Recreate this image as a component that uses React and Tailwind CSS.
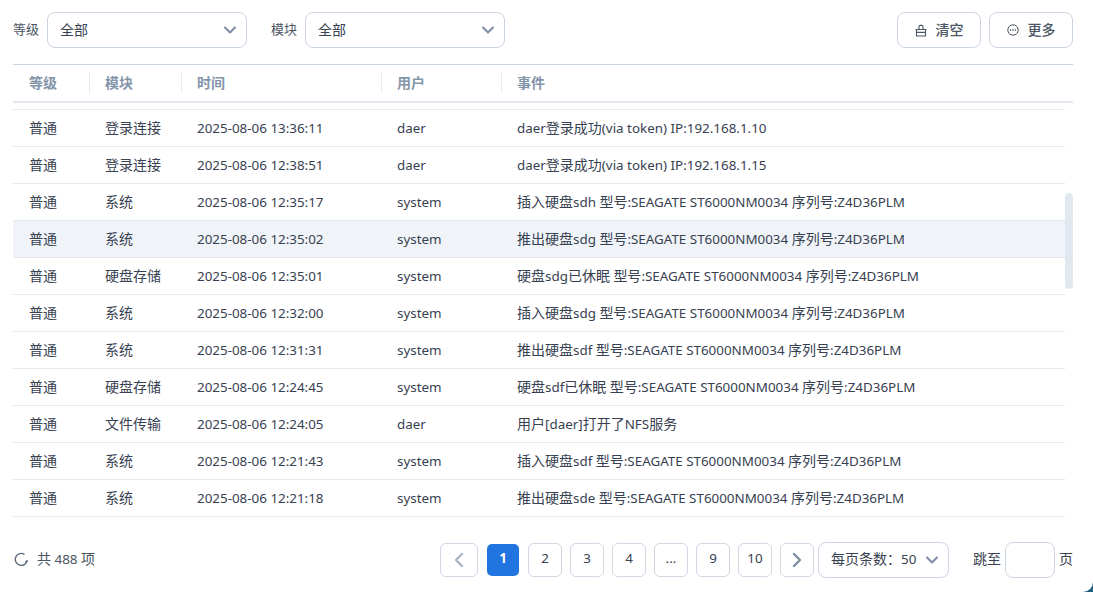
import { ChevronDown, ChevronLeft, ChevronRight } from "lucide-react";

const rows = [
  ["普通", "登录连接", "2025-08-06 13:36:11", "daer", "daer登录成功(via token) IP:192.168.1.10"],
  ["普通", "登录连接", "2025-08-06 12:38:51", "daer", "daer登录成功(via token) IP:192.168.1.15"],
  ["普通", "系统", "2025-08-06 12:35:17", "system", "插入硬盘sdh 型号:SEAGATE ST6000NM0034 序列号:Z4D36PLM"],
  ["普通", "系统", "2025-08-06 12:35:02", "system", "推出硬盘sdg 型号:SEAGATE ST6000NM0034 序列号:Z4D36PLM"],
  ["普通", "硬盘存储", "2025-08-06 12:35:01", "system", "硬盘sdg已休眠 型号:SEAGATE ST6000NM0034 序列号:Z4D36PLM"],
  ["普通", "系统", "2025-08-06 12:32:00", "system", "插入硬盘sdg 型号:SEAGATE ST6000NM0034 序列号:Z4D36PLM"],
  ["普通", "系统", "2025-08-06 12:31:31", "system", "推出硬盘sdf 型号:SEAGATE ST6000NM0034 序列号:Z4D36PLM"],
  ["普通", "硬盘存储", "2025-08-06 12:24:45", "system", "硬盘sdf已休眠 型号:SEAGATE ST6000NM0034 序列号:Z4D36PLM"],
  ["普通", "文件传输", "2025-08-06 12:24:05", "daer", "用户[daer]打开了NFS服务"],
  ["普通", "系统", "2025-08-06 12:21:43", "system", "插入硬盘sdf 型号:SEAGATE ST6000NM0034 序列号:Z4D36PLM"],
  ["普通", "系统", "2025-08-06 12:21:18", "system", "推出硬盘sde 型号:SEAGATE ST6000NM0034 序列号:Z4D36PLM"],
];

const headers = ["等级", "模块", "时间", "用户", "事件"];

// latin runs sit a bit smaller than the CJK ones
function Mixed({ text }) {
  return text.split(/([\u4e00-\u9fff：]+)/).map((part, i) =>
    i % 2 === 1 ? <span key={i} className="text-[14px]">{part}</span> : <span key={i}>{part}</span>
  );
}

function FilterSelect({ label }) {
  return (
    <div className="flex items-center gap-[8px]">
      <span className="pb-[1px] text-[13px] text-[#4b5563]">{label}</span>
      <div className="flex h-[36px] w-[200px] items-center justify-between rounded-[8px] border border-[#cbd5e1] pl-[12px] pr-[6px] text-[14px] text-[#374151]">
        <span className="pb-[2px]">全部</span>
        <ChevronDown size={20} strokeWidth={2.5} className="text-[#7c8ca3]" />
      </div>
    </div>
  );
}

function PageButton({ children, active }) {
  if (active) {
    return (
      <div className="flex h-[34px] w-[34px] items-center justify-center rounded-[6px] border border-transparent bg-[#1f74e0] bg-clip-padding text-[13.4px] font-bold text-white">
        <span className="pb-[2px]">{children}</span>
      </div>
    );
  }
  return (
    <div className="flex h-[34px] w-[34px] items-center justify-center rounded-[6px] border border-[#cfd8e3] text-[13.4px] text-[#374151]">
      <span className="pb-[2px]">{children}</span>
    </div>
  );
}

function NavButton({ children, wide }) {
  return (
    <div className={`flex h-[34px] items-center justify-center rounded-[6px] border border-[#cfd8e3] ${wide ? "w-[38px]" : "w-[34px]"}`}>
      {children}
    </div>
  );
}

export default function App() {
  return (
    <div className="h-[592px] w-[1093px] overflow-hidden bg-[#22607f]">
      <div className="relative flex h-[592px] w-[1093px] flex-col overflow-hidden rounded-br-[10px] bg-white font-['Noto_Sans','Noto_Sans_CJK_SC',sans-serif]">
        <div className="flex h-[64px] items-start justify-between pl-[13px] pr-[20px] pt-[12px]">
          <div className="flex items-center gap-[24px]">
            <FilterSelect label="等级" />
            <FilterSelect label="模块" />
          </div>
          <div className="flex gap-[8px]">
            <div className="flex h-[36px] w-[84px] items-center justify-center gap-[9px] rounded-[8px] border border-[#cbd5e1] text-[14px] font-medium text-[#4b5563]">
              <svg width="12" height="13" viewBox="0 0 12 13" fill="none" stroke="#4b5563" strokeWidth="1.1">
                <path d="M0.5 5.5h11M1.5 5.5v6.5h9V5.5M4 5.5V3q0-1.6 1.2-1.6h1.6q1.2 0 1.2 1.6v2.5M1.5 8.4h9" />
              </svg>
              <span className="pb-[2px]">清空</span>
            </div>
            <div className="flex h-[36px] w-[84px] items-center justify-center gap-[9px] rounded-[8px] border border-[#cbd5e1] text-[14px] font-medium text-[#4b5563]">
              <svg width="12" height="12" viewBox="0 0 12 12" fill="none" stroke="#4b5563" strokeWidth="1">
                <circle cx="6" cy="6" r="5.2" />
                <circle cx="3.7" cy="6" r="0.4" />
                <circle cx="6" cy="6" r="0.4" />
                <circle cx="8.3" cy="6" r="0.4" />
              </svg>
              <span className="pb-[2px]">更多</span>
            </div>
          </div>
        </div>

        <div className="relative ml-[13px] mr-[20px] border-t border-[#cbd5e1]">
          <div className="grid h-[38px] grid-cols-[76px_92px_200px_120px_1fr] items-center border-b-[2px] border-[#e5e9ef]">
            {headers.map((h, i) => (
              <div key={h} className={`flex h-[20px] items-center text-[14px] font-bold text-[#8495aa] ${i > 0 ? "border-l border-[#e5e9ef] pl-[15px]" : "pl-[16px]"}`}>
                <span className="pb-[2px]">{h}</span>
              </div>
            ))}
          </div>
          <div className="mr-[8px]">
            <div className="h-[7px] border-b border-[#e5e9ef]" />
            {rows.map((r, i) => (
              <div
                key={i}
                className={`grid h-[37px] grid-cols-[76px_92px_200px_120px_1fr] items-center border-b border-[#e5e9ef] text-[13.4px] text-[#374151] ${i === 3 ? "bg-[#f0f4f8]" : ""}`}
              >
                {r.map((c, j) => (
                  <div key={j} className={`pl-[16px] whitespace-nowrap ${j < 2 ? "pb-[1px]" : ""}`}><Mixed text={c} /></div>
                ))}
              </div>
            ))}
          </div>
          <div className="absolute right-0 top-[128px] h-[96px] w-[8px] rounded-[4px] bg-[#e2e8f0]" />
        </div>

        <div className="flex flex-1 items-center justify-between pl-[14px] pr-[20px] pt-[10px]">
          <div className="flex items-center gap-[8px] text-[13.4px] text-[#4b5563]">
            <svg width="15" height="15" viewBox="0 0 15 15" fill="none" stroke="#5b6b7f" strokeWidth="1.4">
              <path d="M13.2 8.5A6 6 0 1 1 10.5 2.3" />
              <path d="M13.5 8.6l-1.9 1.3" />
            </svg>
            <span className="pb-[1px]"><Mixed text="共 488 项" /></span>
          </div>
          <div className="flex items-center">
            <div className="flex items-center gap-[8px]">
              <NavButton wide><ChevronLeft size={24} strokeWidth={2.4} className="text-[#a9b6c8]" /></NavButton>
              <PageButton active>1</PageButton>
              <PageButton>2</PageButton>
              <PageButton>3</PageButton>
              <PageButton>4</PageButton>
              <PageButton>...</PageButton>
              <PageButton>9</PageButton>
              <PageButton>10</PageButton>
              <NavButton><ChevronRight size={24} strokeWidth={2.4} className="text-[#7c8ca3]" /></NavButton>
            </div>
            <div className="ml-[4px] flex h-[36px] w-[131px] items-center justify-between rounded-[8px] border border-[#cbd5e1] pl-[12px] pr-[6px] text-[13.4px] text-[#374151]">
              <span className="pb-[2px]"><Mixed text="每页条数：50" /></span>
              <ChevronDown size={20} strokeWidth={2.5} className="text-[#7c8ca3]" />
            </div>
            <span className="ml-[24px] pb-[2px] text-[14px] text-[#374151]">跳至</span>
            <div className="ml-[4px] h-[36px] w-[50px] rounded-[8px] border border-[#cbd5e1]" />
            <span className="ml-[4px] pb-[2px] text-[14px] text-[#374151]">页</span>
          </div>
        </div>
      </div>
    </div>
  );
}
